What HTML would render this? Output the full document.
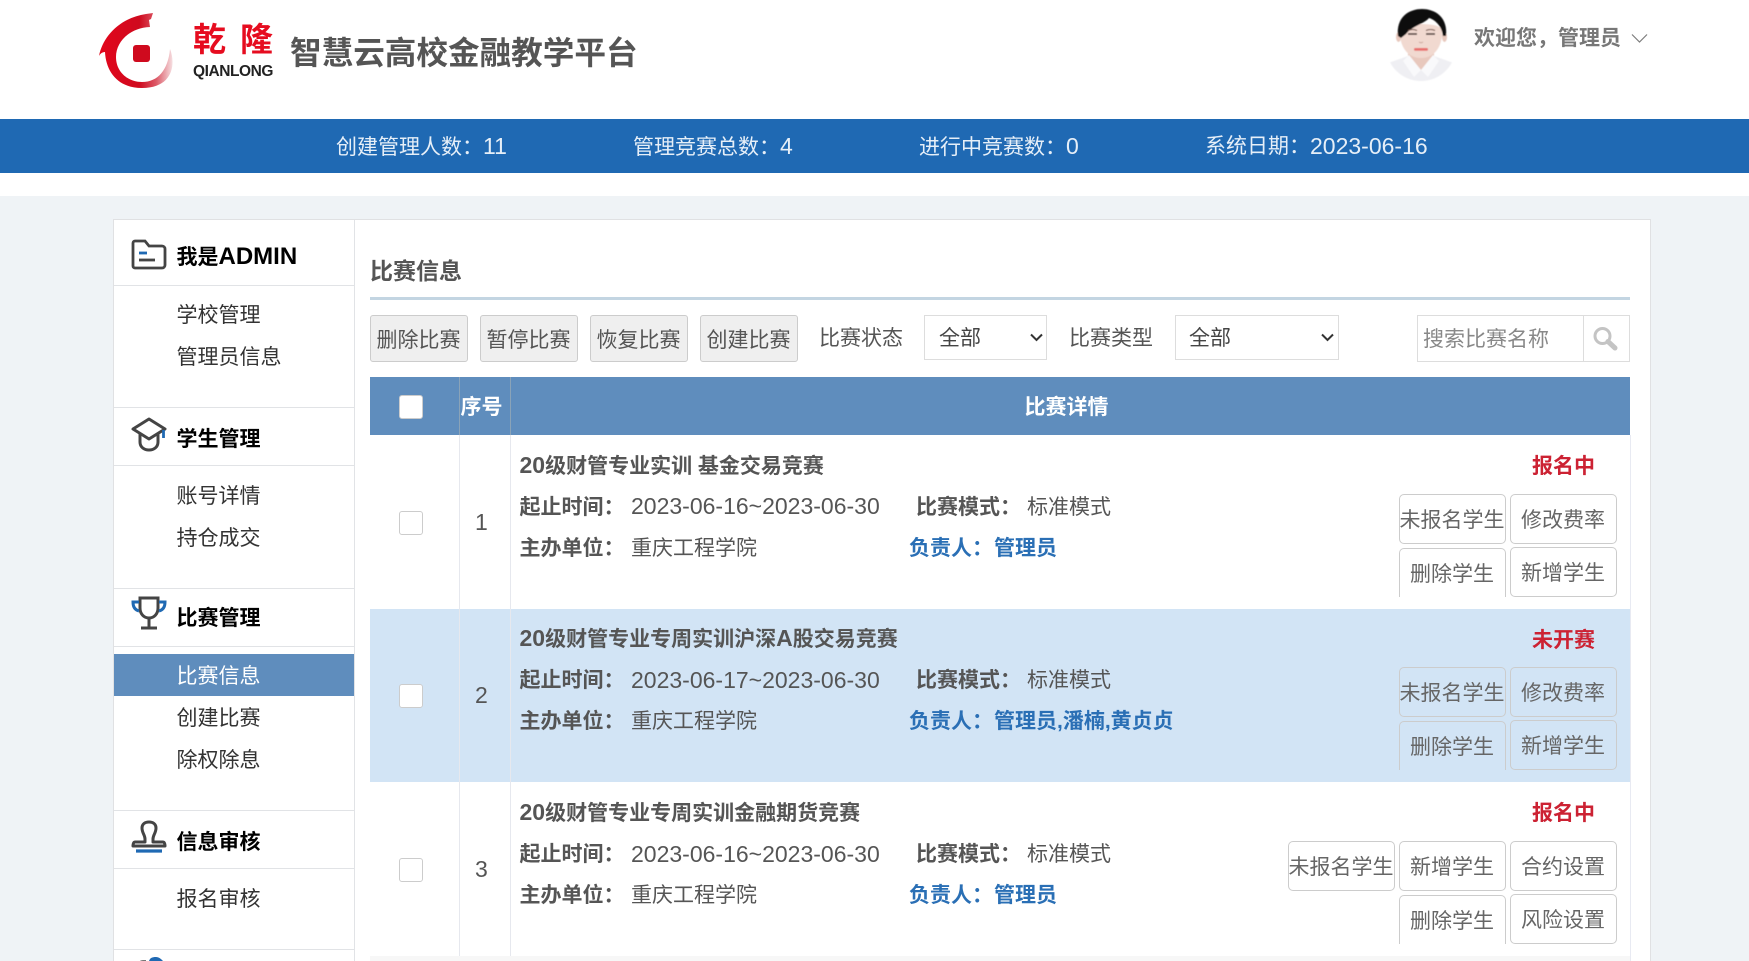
<!DOCTYPE html>
<html lang="zh-CN"><head><meta charset="utf-8"><title>智慧云高校金融教学平台</title>
<style>
html,body{margin:0;padding:0;width:1749px;height:961px;overflow:hidden;background:#fff}
body{position:relative;font-family:"Liberation Sans","Noto Sans CJK SC",sans-serif;font-size:21px;color:#555}
.a{position:absolute}
.t{position:absolute;white-space:nowrap;line-height:30px;height:30px}
.n{font-size:23px}
b{font-weight:700}
.sh{font-weight:700;color:#000;left:176.500px}
.si{color:#333;left:176.500px}
.hl{position:absolute;left:114px;width:240px;height:1px;background:#e1e3e6}
.cb{position:absolute;left:399px;width:22px;height:22px;border:1px solid #ccc;border-radius:3px;background:#fff}
.tb{position:absolute;top:315px;width:96px;height:45px;border:1px solid #ccc;border-radius:3px;background:#efefef;color:#555;text-align:center;line-height:49px;text-indent:-1px}
.b{position:absolute;width:105px;height:48px;border:1px solid #ccc;border-radius:5px;color:#666;text-align:center;line-height:51px;white-space:nowrap;text-indent:-1px}
.c{height:48px;border-bottom:0;border-radius:5px 5px 0 0}
.st{left:1532px;color:#cc2233;font-weight:700}
.lk{color:#2a6fb5;font-weight:700}
.cl{position:absolute;width:1px;top:435px;height:521px;background:#e6e8ee}
</style></head><body>

<!-- page background -->
<div class="a" style="left:0;top:196px;width:1749px;height:765px;background:#eff3f6"></div>
<div class="a" style="left:113px;top:219px;width:1538px;height:742px;background:#fff;border:1px solid #e0e1e3;border-bottom:0;box-sizing:border-box"></div>
<div class="a" style="left:354px;top:220px;width:1px;height:741px;background:#e1e3e6"></div>

<!-- logo -->
<svg class="a" style="left:95px;top:8px" width="85" height="85" viewBox="95 8 85 85">
<defs><linearGradient id="g" x1="0" x2="1" y1="0" y2="0"><stop offset="0" stop-color="#e3051b"/><stop offset=".55" stop-color="#cf0a1e"/><stop offset=".78" stop-color="#dc5a68"/><stop offset="1" stop-color="#f6dfe1"/></linearGradient></defs>
<path fill="url(#g)" d="M150 27C129 28 116 42 116 57C116 72 128 82 142 82C158 82 168 70 170 49C176 64 173 88 142 88C118 88 106 72 105 52C102 52 100 54 99 56C103 36 120 18 146 14L153 13L151 19L149 20Z"/>
<rect x="133" y="45" width="17" height="17" rx="3" fill="#cf0a1e"/>
</svg>
<div class="t" style="left:193px;top:23px;font-size:33px;line-height:34px;height:34px;color:#e60c1f;letter-spacing:14px;font-weight:700">乾隆</div>
<div class="t" style="left:193px;top:61px;font-size:15.500px;line-height:22px;height:22px;color:#222;font-weight:700;letter-spacing:-.45px">QIANLONG</div>
<div class="t" style="left:290px;top:32px;font-size:31.600px;line-height:42px;height:42px;color:#555;font-weight:700">智慧云高校金融教学平台</div>

<!-- avatar -->
<svg class="a" style="left:1385px;top:5px" width="75" height="80" viewBox="1385 5 75 80">
<defs><clipPath id="ac"><circle cx="1421" cy="46" r="35"/></clipPath><filter id="bl" x="-10%" y="-10%" width="120%" height="120%"><feGaussianBlur stdDeviation=".5"/></filter></defs>
<g filter="url(#bl)">
<g clip-path="url(#ac)">
<path fill="#efeff3" d="M1380 85V66L1408 56H1434L1462 66V85Z"/>
</g>
<path fill="#e8c8bd" d="M1408 48H1434V57L1421 70L1408 57Z"/>
<path fill="#f9f9fb" d="M1409 55L1421 70L1414 77L1403 61ZM1433 55L1421 70L1428 77L1439 61Z"/>
<ellipse cx="1398.500" cy="37" rx="2.500" ry="5" fill="#e8c8bd"/>
<ellipse cx="1444.500" cy="37" rx="2.500" ry="5" fill="#e8c8bd"/>
<path fill="#f1d9d0" d="M1400 30C1400 22 1442 22 1442 30C1443 44 1436 58 1421 58C1406 58 1399 44 1400 30Z"/>
<path fill="#0c0c0c" d="M1398 36C1396 18 1408 9 1422 9C1436 9 1448 18 1446 36L1443 36C1442 27 1436 20 1429 18C1424 24 1412 26 1406 34L1401 38Z"/>
<path d="M1408 34h9M1426 34h9" stroke="#3a2a28" stroke-width="1.600"/>
<path d="M1408 30.500q4.500-2 9 0M1426 30.500q4.500-2 9 0" stroke="#6a4a40" stroke-width="1" fill="none"/>
<path d="M1419 42q2 1.500 4 0" stroke="#c9a59a" stroke-width="1" fill="none"/>
<rect x="1414" y="48" width="14" height="2.800" rx="1.200" fill="#e8706e"/>
</g>
</svg>
<div class="t" style="left:1474px;top:24px;font-weight:700;color:#777">欢迎您，管理员</div>
<svg class="a" style="left:1631px;top:33px" width="17" height="11" viewBox="0 0 17 11"><path d="M1 1.500L8.500 9L16 1.500" fill="none" stroke="#7d7d7d" stroke-width="1.200"/></svg>

<!-- stats bar -->
<div class="a" style="left:0;top:119px;width:1749px;height:54px;background:#1f69b3"></div>
<div class="t" style="left:336px;top:131px;color:#e6eff8">创建管理人数：<span class="n">11</span></div>
<div class="t" style="left:633px;top:131px;color:#e6eff8">管理竞赛总数：<span class="n">4</span></div>
<div class="t" style="left:919px;top:131px;color:#e6eff8">进行中竞赛数：<span class="n">0</span></div>
<div class="t" style="left:1205px;top:132px;color:#e6eff8">系统日期：</div>
<div class="t n" style="left:1310px;top:131px;color:#e6eff8">2023-06-16</div>

<!-- sidebar -->
<svg class="a" style="left:130px;top:238px" width="38" height="32" viewBox="0 0 38 32"><path d="M3 5a2 2 0 0 1 2-2H15L19 8H32a3 3 0 0 1 3 3V27a3 3 0 0 1-3 3H5a2 2 0 0 1-2-2Z" fill="none" stroke="#444" stroke-width="2.800"/><path d="M9 15H17" stroke="#1f69b3" stroke-width="2.800"/><path d="M9 22H25" stroke="#444" stroke-width="2.800"/></svg>
<div class="t sh" style="top:242px">我是<span style="font-size:24px">ADMIN</span></div>
<div class="hl" style="top:285px"></div>
<div class="t si" style="top:301px">学校管理</div>
<div class="t si" style="top:343px">管理员信息</div>
<div class="hl" style="top:407px"></div>

<svg class="a" style="left:130px;top:417px" width="38" height="35" viewBox="0 0 38 35"><path d="M19 2L35 12L19 22L3 12Z" fill="none" stroke="#444" stroke-width="3" stroke-linejoin="round"/><path d="M10 17V25C10 30 14 33 19 33C24 33 28 30 28 25V17" fill="none" stroke="#444" stroke-width="3"/><path d="M33.500 13V21" stroke="#1f69b3" stroke-width="2.800"/></svg>
<div class="t sh" style="top:425px">学生管理</div>
<div class="hl" style="top:465px"></div>
<div class="t si" style="top:482px">账号详情</div>
<div class="t si" style="top:524px">持仓成交</div>
<div class="hl" style="top:588px"></div>

<svg class="a" style="left:130px;top:595px" width="38" height="36" viewBox="0 0 38 36"><path d="M10 3H28V13C28 19 24 23 19 23C14 23 10 19 10 13Z" fill="none" stroke="#444" stroke-width="3"/><path d="M9 7H3C3 12 5 15 9 16M29 7H35C35 12 33 15 29 16" fill="none" stroke="#1f69b3" stroke-width="3"/><path d="M19 23V32M11 33H27" stroke="#444" stroke-width="3"/></svg>
<div class="t sh" style="top:604px">比赛管理</div>
<div class="hl" style="top:646px"></div>
<div class="a" style="left:114px;top:654px;width:240px;height:42px;background:#5f8dbd"></div>
<div class="t si" style="top:662px;color:#fff">比赛信息</div>
<div class="t si" style="top:704px">创建比赛</div>
<div class="t si" style="top:746px">除权除息</div>
<div class="hl" style="top:810px"></div>

<svg class="a" style="left:130px;top:820px" width="38" height="36" viewBox="0 0 38 36"><path d="M15 19C15 15 12 13 12 8C12 4 15 2 19 2C23 2 26 4 26 8C26 13 23 15 23 19V22H33C35 22 35 26 35 26H3C3 26 3 22 5 22H15Z" fill="none" stroke="#444" stroke-width="3" stroke-linejoin="round"/><path d="M6 31H32" stroke="#1f69b3" stroke-width="3.200"/></svg>
<div class="t sh" style="top:828px">信息审核</div>
<div class="hl" style="top:868px"></div>
<div class="t si" style="top:885px">报名审核</div>
<div class="hl" style="top:949px"></div>
<svg class="a" style="left:138px;top:956px" width="28" height="5" viewBox="0 0 28 5"><path d="M11 5C12 2 14 1 18 1C21 1 23 3 25 5Z" fill="#1f69b3"/><path d="M2 5C3 4 5 4 8 4V5Z" fill="#777"/></svg>

<!-- main heading -->
<div class="t" style="left:370px;top:256px;font-size:23px;font-weight:700;color:#555">比赛信息</div>
<div class="a" style="left:370px;top:297px;width:1260px;height:3px;background:#c3d5e2"></div>

<!-- toolbar -->
<div class="tb" style="left:370px">删除比赛</div>
<div class="tb" style="left:480px">暂停比赛</div>
<div class="tb" style="left:590px">恢复比赛</div>
<div class="tb" style="left:700px">创建比赛</div>
<div class="t" style="left:819px;top:324px;color:#555">比赛状态</div>
<div class="a" style="left:924px;top:315px;width:121px;height:43px;border:1px solid #ddd;background:#fff"></div>
<div class="t" style="left:939px;top:324px;color:#444">全部</div>
<svg class="a" style="left:1030px;top:333px" width="13" height="9" viewBox="0 0 13 9"><path d="M1 1.500L6.500 7L12 1.500" fill="none" stroke="#333" stroke-width="2"/></svg>
<div class="t" style="left:1069px;top:324px;color:#555">比赛类型</div>
<div class="a" style="left:1175px;top:315px;width:162px;height:43px;border:1px solid #ddd;background:#fff"></div>
<div class="t" style="left:1189px;top:324px;color:#444">全部</div>
<svg class="a" style="left:1321px;top:333px" width="13" height="9" viewBox="0 0 13 9"><path d="M1 1.500L6.500 7L12 1.500" fill="none" stroke="#333" stroke-width="2"/></svg>
<div class="a" style="left:1417px;top:315px;width:211px;height:45px;border:1px solid #ddd;background:#fff"></div>
<div class="a" style="left:1583px;top:315px;width:1px;height:47px;background:#ddd"></div>
<div class="t" style="left:1423px;top:325px;color:#888">搜索比赛名称</div>
<svg class="a" style="left:1592px;top:326px" width="26" height="26" viewBox="0 0 26 26"><circle cx="10.500" cy="10" r="7.500" fill="none" stroke="#c4c4c4" stroke-width="3"/><path d="M16 15.500L23 22" stroke="#c4c4c4" stroke-width="5" stroke-linecap="round"/></svg>

<!-- table header -->
<div class="a" style="left:370px;top:377px;width:1260px;height:58px;background:#5f8dbd"></div>
<div class="a" style="left:459px;top:377px;width:1px;height:58px;background:#8aa3b8"></div>
<div class="a" style="left:510px;top:377px;width:1px;height:58px;background:#8aa3b8"></div>
<div class="cb" style="top:395px"></div>
<div class="t" style="left:460.500px;top:393px;color:#fff;font-weight:700">序号</div>
<div class="t" style="left:1024.500px;top:393px;color:#fff;font-weight:700">比赛详情</div>

<!-- rows -->
<div class="a" style="left:370px;top:609px;width:1260px;height:173px;background:#d2e4f5"></div>
<div class="a" style="left:370px;top:956px;width:1260px;height:5px;background:#f7f7f7"></div>
<div class="a" style="left:1630px;top:435px;width:1px;height:526px;background:#e8eaf2"></div>
<div class="cl" style="left:459px"></div>
<div class="cl" style="left:510px"></div>

<!-- row 1 -->
<div class="cb" style="top:511px"></div>
<div class="t n" style="left:475px;top:507px">1</div>
<div class="t" style="left:519.500px;top:450px"><b><span class="n">20</span>级财管专业实训 基金交易竞赛</b></div>
<div class="t" style="left:519.500px;top:493px"><b>起止时间：</b></div>
<div class="t n" style="left:631px;top:491px">2023-06-16~2023-06-30</div>
<div class="t" style="left:916px;top:493px"><b>比赛模式：</b></div>
<div class="t" style="left:1027px;top:493px">标准模式</div>
<div class="t" style="left:519.500px;top:534px"><b>主办单位：</b></div>
<div class="t" style="left:631px;top:534px">重庆工程学院</div>
<div class="t lk" style="left:909px;top:534px">负责人：</div>
<div class="t lk" style="left:994px;top:534px">管理员</div>
<div class="t st" style="top:452px">报名中</div>
<div class="b" style="left:1399px;top:494px">未报名学生</div>
<div class="b" style="left:1510px;top:494px">修改费率</div>
<div class="b c" style="left:1399px;top:548px">删除学生</div>
<div class="b" style="left:1510px;top:547px">新增学生</div>

<!-- row 2 -->
<div class="cb" style="top:684px"></div>
<div class="t n" style="left:475px;top:680px">2</div>
<div class="t" style="left:519.500px;top:623px"><b><span class="n">20</span>级财管专业专周实训沪深<span class="n">A</span>股交易竞赛</b></div>
<div class="t" style="left:519.500px;top:666px"><b>起止时间：</b></div>
<div class="t n" style="left:631px;top:665px">2023-06-17~2023-06-30</div>
<div class="t" style="left:916px;top:666px"><b>比赛模式：</b></div>
<div class="t" style="left:1027px;top:666px">标准模式</div>
<div class="t" style="left:519.500px;top:707px"><b>主办单位：</b></div>
<div class="t" style="left:631px;top:707px">重庆工程学院</div>
<div class="t lk" style="left:909px;top:707px">负责人：</div>
<div class="t lk" style="left:994px;top:707px">管理员,潘楠,黄贞贞</div>
<div class="t st" style="top:626px">未开赛</div>
<div class="b" style="left:1399px;top:667px">未报名学生</div>
<div class="b" style="left:1510px;top:667px">修改费率</div>
<div class="b c" style="left:1399px;top:721px">删除学生</div>
<div class="b" style="left:1510px;top:720px">新增学生</div>

<!-- row 3 -->
<div class="cb" style="top:858px"></div>
<div class="t n" style="left:475px;top:854px">3</div>
<div class="t" style="left:519.500px;top:797px"><b><span class="n">20</span>级财管专业专周实训金融期货竞赛</b></div>
<div class="t" style="left:519.500px;top:840px"><b>起止时间：</b></div>
<div class="t n" style="left:631px;top:839px">2023-06-16~2023-06-30</div>
<div class="t" style="left:916px;top:840px"><b>比赛模式：</b></div>
<div class="t" style="left:1027px;top:840px">标准模式</div>
<div class="t" style="left:519.500px;top:881px"><b>主办单位：</b></div>
<div class="t" style="left:631px;top:881px">重庆工程学院</div>
<div class="t lk" style="left:909px;top:881px">负责人：</div>
<div class="t lk" style="left:994px;top:881px">管理员</div>
<div class="t st" style="top:799px">报名中</div>
<div class="b" style="left:1288px;top:841px">未报名学生</div>
<div class="b" style="left:1399px;top:841px">新增学生</div>
<div class="b" style="left:1510px;top:841px">合约设置</div>
<div class="b c" style="left:1399px;top:895px">删除学生</div>
<div class="b" style="left:1510px;top:894px">风险设置</div>

</body></html>
